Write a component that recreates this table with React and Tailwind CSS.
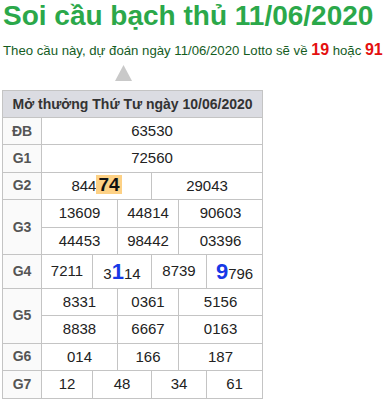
export default function App() {
  const td = 'border border-[#c4c4c4] text-center align-middle text-[15px] text-[#222] h-[27.4px] p-0';
  const lb = 'border border-[#c4c4c4] text-center align-middle text-[14px] font-bold text-[#555] bg-[#fafafa] p-0';

  return (
    <div className="w-[391px] h-[399px] bg-white overflow-hidden" style={{ fontFamily: '"Liberation Sans", Arial, sans-serif' }}>
      <h1 className="pl-[3px] text-[28px] leading-[32px] font-bold text-[#2ba84a]">Soi cầu bạch thủ 11/06/2020</h1>

      <p className="mt-[9px] pl-[3px] text-[13.2px] leading-[18px] text-[#155d1f] whitespace-nowrap">
        Theo cầu này, dự đoán ngày 11/06/2020 Lotto sẽ về{' '}
        <b className="text-[16px] text-[#e4100f]">19</b> hoặc{' '}
        <b className="text-[16px] text-[#e4100f]">91</b>
      </p>

      {/* arrow */}
      <div className="mt-[5px] ml-[115px] h-[16px] w-[17px]">
        <svg width="17" height="16" viewBox="0 0 17 16">
          <polygon points="8.5,0 17,16 0,16" fill="#c9c9c9" />
        </svg>
      </div>

      <table className="mt-[9px] ml-[2px] w-[260px] table-fixed border-collapse">
        <colgroup>
          <col className="w-[39px]" />
          <col className="w-[51px]" />
          <col className="w-[25px]" />
          <col className="w-[34px]" />
          <col className="w-[27px]" />
          <col className="w-[28px]" />
          <col className="w-[56px]" />
        </colgroup>
        <tbody>
          <tr>
            <th colSpan={7} className="border border-[#c4c4c4] bg-[#dbdce2] h-[27px] text-[14px] font-bold text-[#333] text-center whitespace-nowrap">
              Mở thưởng Thứ Tư ngày 10/06/2020
            </th>
          </tr>
          <tr>
            <td className={lb}>ĐB</td>
            <td colSpan={6} className={td}>63530</td>
          </tr>
          <tr>
            <td className={lb}>G1</td>
            <td colSpan={6} className={td}>72560</td>
          </tr>
          <tr>
            <td className={lb}>G2</td>
            <td colSpan={3} className={td}>
              844<span className="inline-block bg-[#fdd185] px-[2px] text-[19px] leading-[19px] font-bold text-[#111]">74</span>
            </td>
            <td colSpan={3} className={td}>29043</td>
          </tr>
          <tr>
            <td rowSpan={2} className={lb}>G3</td>
            <td colSpan={2} className={td}>13609</td>
            <td colSpan={2} className={td}>44814</td>
            <td colSpan={2} className={td}>90603</td>
          </tr>
          <tr>
            <td colSpan={2} className={td}>44453</td>
            <td colSpan={2} className={td}>98442</td>
            <td colSpan={2} className={td}>03396</td>
          </tr>
          <tr>
            <td className={`${lb} h-[33px]`}>G4</td>
            <td className={td}>7211</td>
            <td colSpan={2} className={td}>
              3<span className="text-[22px] font-bold text-[#1638e6]">1</span>14
            </td>
            <td colSpan={2} className={td}>8739</td>
            <td className={td}>
              <span className="text-[22px] font-bold text-[#1638e6]">9</span>796
            </td>
          </tr>
          <tr>
            <td rowSpan={2} className={lb}>G5</td>
            <td colSpan={2} className={td}>8331</td>
            <td colSpan={2} className={td}>0361</td>
            <td colSpan={2} className={td}>5156</td>
          </tr>
          <tr>
            <td colSpan={2} className={td}>8838</td>
            <td colSpan={2} className={td}>6667</td>
            <td colSpan={2} className={td}>0163</td>
          </tr>
          <tr>
            <td className={lb}>G6</td>
            <td colSpan={2} className={td}>014</td>
            <td colSpan={2} className={td}>166</td>
            <td colSpan={2} className={td}>187</td>
          </tr>
          <tr>
            <td className={lb}>G7</td>
            <td className={td}>12</td>
            <td colSpan={2} className={td}>48</td>
            <td colSpan={2} className={td}>34</td>
            <td className={td}>61</td>
          </tr>
        </tbody>
      </table>
    </div>
  );
}
